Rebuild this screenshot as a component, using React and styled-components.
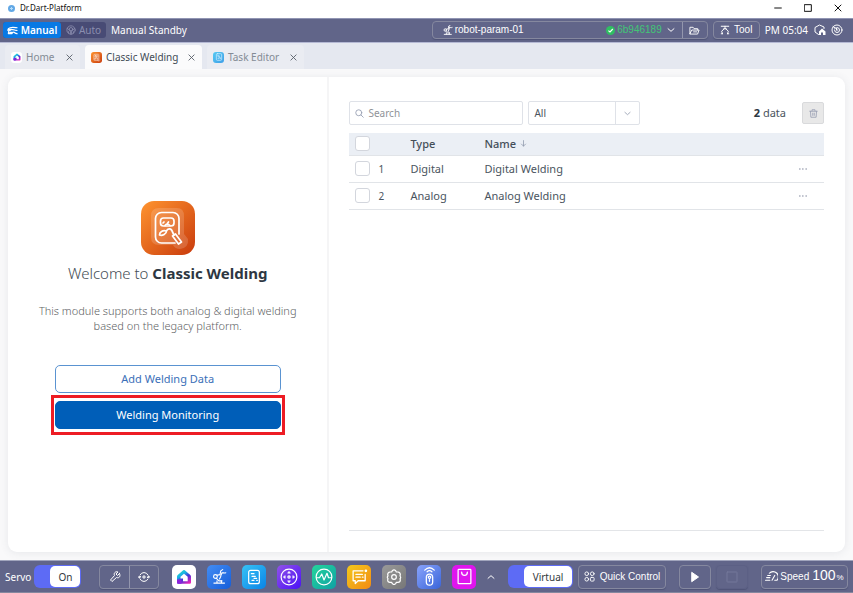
import React from "react";
import styled, { createGlobalStyle, css } from "styled-components";

const GlobalStyle = createGlobalStyle`
  *, *::before, *::after { box-sizing: border-box; }
  body { margin: 0; background: #f9f9fa; }
  button, input, select { font: inherit; color: inherit; margin: 0; padding: 0; }
  button { cursor: pointer; background: none; border: 0; }
  svg { display: block; flex: none; }
`;

const ui = `"Noto Sans", "Open Sans", sans-serif`;
const arial = `"Liberation Sans", Arial, sans-serif`;

const Window = styled.div`
  min-height: 100vh;
  display: flex;
  flex-direction: column;
  font: 400 10px/16px ${ui};
  color: #4a545e;
`;

/* ---------- window title ---------- */
const TitleBar = styled.header`
  height: 18px;
  display: flex;
  align-items: center;
  padding: 0 7px 2px 8px;
  gap: 5px;
  background: #fff;
  color: #111;
  font-size: 8px;
`;
const WindowControls = styled.div`
  margin-left: auto;
  display: flex;
  gap: 14px;
`;
const WindowButton = styled.button`
  width: 16px;
  height: 16px;
  display: grid;
  place-items: center;
`;

/* ---------- status bar ---------- */
const StatusBar = styled.div`
  height: 25px;
  display: flex;
  align-items: center;
  padding: 0 10px 1px 3px;
  background: #616589;
  border-top: 1px solid #9195b3;
  border-bottom: 1px solid #b5b9d4;
  color: #fff;
`;
const ModeSwitch = styled.div`
  display: flex;
  height: 16px;
  border-radius: 3px;
  background: #484b75;
`;
const ModeButton = styled.button`
  display: flex;
  align-items: center;
  justify-content: center;
  gap: 3px;
  width: ${(p) => (p.$active ? 58 : 45)}px;
  border-radius: 3px;
  font-weight: ${(p) => (p.$active ? 600 : 400)};
  color: ${(p) => (p.$active ? "#fff" : "#8b8eaf")};
  background: ${(p) => (p.$active ? "#0879e4" : "transparent")};
`;
const Status = styled.span`
  margin-left: 5px;
`;
const outline = css`
  border: 1px solid #85889f;
  border-radius: 4px;
  box-shadow: 0 1px 1px #4f5377;
`;
const ParamBox = styled.div`
  ${outline}
  margin-left: auto;
  width: 276px;
  height: 18px;
  display: flex;
  font: 10px/16px ${arial};
`;
const ParamSelect = styled.button`
  flex: 1;
  display: flex;
  align-items: center;
  padding: 0 7px 0 10px;
  gap: 2px;
`;
const Hash = styled.span`
  margin-left: auto;
  display: flex;
  align-items: center;
  gap: 2px;
  margin-right: 3px;
  color: #42c576;
`;
const FolderButton = styled.button`
  width: 25px;
  display: grid;
  place-items: center;
  border-left: 1px solid #9396ad;
`;
const ToolButton = styled.button`
  ${outline}
  margin-left: 5px;
  width: 47px;
  height: 18px;
  display: flex;
  align-items: center;
  justify-content: center;
  gap: 4px;
  font: 500 10px/16px ${arial};
`;
const Clock = styled.span`
  margin: 0 6px 0 5px;
`;
const IconButton = styled.button`
  display: grid;
  place-items: center;
  width: 12px;
  height: 16px;
  margin-right: ${(p) => p.$gap || 0}px;
`;

/* ---------- tabs ---------- */
const Tabs = styled.nav`
  height: 26px;
  padding: 2px 0 0 5px;
  display: flex;
  gap: 5px;
  background: #e5e8f0;
`;
const Tab = styled.div`
  width: ${(p) => p.$w}px;
  display: flex;
  align-items: center;
  justify-content: space-between;
  padding: 0 6px;
  border-radius: 4px 4px 0 0;
  background: ${(p) => (p.$active ? "#fbfbfc" : "#eaecf2")};
  color: ${(p) => (p.$active ? "#414b55" : "#848b95")};
`;
const TabButton = styled.button`
  display: flex;
  align-items: center;
  gap: 4px;
  white-space: nowrap;
`;
const TabClose = styled.button`
  display: grid;
  place-items: center;
  width: 10px;
  height: 16px;
  color: #555b66;
`;

/* ---------- workspace ---------- */
const Workspace = styled.main`
  flex: 1;
  display: flex;
  padding: 8px;
  background: #f9f9fa;
`;
const Card = styled.div`
  flex: 1;
  display: flex;
  background: #fff;
  border-radius: 9px;
  box-shadow: 0 1px 8px rgba(70, 75, 100, 0.1);
`;
const Intro = styled.section`
  width: 38.4%;
  display: flex;
  flex-direction: column;
  align-items: center;
  justify-content: center;
  padding-top: 7px;
  border-right: 2px solid #f5f5f6;
  text-align: center;
`;
const Welcome = styled.h1`
  margin: 7px 0 0;
  font-size: 15px;
  line-height: 22px;
  font-weight: 300;
  color: #454d55;
  b { font-weight: 700; color: #2d3742; }
`;
const Description = styled.p`
  width: 270px;
  margin: 19px 0 32px;
  font-size: 11px;
  line-height: 15px;
  font-weight: 300;
  color: #606264;
`;
const Marked = styled.div`
  margin-top: 2px;
  padding: 3px 1px;
  border: 3px solid #ed1c24;
`;
const Action = styled.button`
  display: block;
  width: 226px;
  height: 28px;
  border-radius: 5px;
  border: 1px solid #5a93d1;
  font-size: 11px;
  color: #3b6fb8;
  ${(p) => p.$primary && css`
    background: #005eb8;
    border-color: #005eb8;
    color: #fff;
  `}
`;

const Listing = styled.section`
  flex: 1;
  display: flex;
  flex-direction: column;
  padding: 24px 21px 21px 20px;
`;
const Filters = styled.div`
  display: flex;
  align-items: center;
  margin-bottom: 8px;
`;
const field = css`
  height: 24px;
  border: 1px solid #dfe2e8;
  border-radius: 2px;
  background: #fff;
`;
const SearchBox = styled.label`
  ${field}
  width: 174px;
  display: flex;
  align-items: center;
  gap: 4px;
  padding: 0 5px;
  color: #9aa2b4;
  input {
    flex: 1;
    min-width: 0;
    border: 0;
    outline: 0;
    background: none;
  }
  input::placeholder { color: #8f9398; opacity: 1; }
`;
const SelectBox = styled.label`
  ${field}
  width: 112px;
  margin-left: 5px;
  display: grid;
  grid-template-columns: 1fr 24px;
  select {
    grid-area: 1 / 1 / 2 / 3;
    appearance: none;
    border: 0;
    background: none;
    padding-left: 5px;
  }
`;
const SelectArrow = styled.span`
  grid-area: 1 / 2 / 2 / 3;
  display: grid;
  place-items: center;
  border-left: 1px solid #dfe2e8;
  pointer-events: none;
  color: #9aa2b4;
`;
const Count = styled.span`
  margin-left: auto;
  font-size: 11px;
  b { color: #2d3742; }
`;
const DeleteButton = styled.button`
  width: 22px;
  height: 22px;
  margin-left: 16px;
  display: grid;
  place-items: center;
  border: 1px solid #d9dadc;
  border-radius: 2px;
  background: #e8e8e8;
  color: #9da3b5;
`;
const TableArea = styled.div`
  flex: 1;
  border-bottom: 1px solid #e3e5e8;
`;
const Table = styled.table`
  width: 100%;
  border-collapse: collapse;
  table-layout: fixed;
  font-size: 11px;
  th, td {
    padding: 0;
    height: 27px;
    text-align: left;
    font-weight: 400;
    border-bottom: 1px solid #e1e4e8;
  }
  th {
    height: 22px;
    font-weight: 500;
    color: #444e58;
    background: #ebeff5;
  }
  td:first-child, th:first-child { padding-left: 6px; }
`;
const Col = styled.col`
  width: ${(p) => p.$w}px;
`;
const Check = styled.input`
  display: block;
  appearance: none;
  width: 15px;
  height: 15px;
  border: 1px solid #d3d6dd;
  border-radius: 3px;
  background: #fff;
`;
const RowNumber = styled.td`
  font-size: 10px;
`;
const SortButton = styled.button`
  display: flex;
  align-items: center;
  gap: 4px;
`;
const MoreButton = styled.button`
  display: block;
  width: 10px;
  height: 16px;
  color: #9ba1b2;
`;

/* ---------- bottom bar ---------- */
const BottomBar = styled.footer`
  height: 33px;
  display: flex;
  align-items: center;
  padding: 0 5px;
  background: #616589;
  border-top: 1px solid #a1a5bd;
  border-bottom: 1px solid #85889f;
  color: #fff;
`;
const Toggle = styled.label`
  width: ${(p) => p.$w}px;
  height: 23px;
  margin-left: ${(p) => p.$left}px;
  display: flex;
  padding: 1px 1px 1px 16px;
  border-radius: 6px;
  background: #5d6bf5;
  span {
    flex: 1;
    display: grid;
    place-items: center;
    border-radius: 5px;
    background: #fff;
    color: #333940;
  }
  input {
    appearance: none;
    width: 0;
    height: 0;
  }
`;
const Group = styled.div`
  ${outline}
  height: 24px;
  margin-left: ${(p) => p.$left}px;
  display: flex;
`;
const GroupButton = styled.button`
  width: 29px;
  display: grid;
  place-items: center;
  & + & { border-left: 1px solid #9396ad; }
`;
const Dock = styled.div`
  flex: 1;
  display: flex;
  align-items: center;
  justify-content: center;
  gap: 11px;
`;
const App24 = styled.button`
  width: 24px;
  height: 24px;
  display: grid;
  place-items: center;
  border-radius: 5px;
  background: ${(p) => p.$bg};
`;
const DockArrow = styled.button`
  width: 8px;
  height: 24px;
`;
const BarButton = styled.button`
  ${outline}
  width: ${(p) => p.$w}px;
  height: 24px;
  margin-left: ${(p) => p.$left}px;
  display: flex;
  align-items: center;
  justify-content: center;
  gap: ${(p) => p.$gap || 0}px;
  font: 10px/16px ${arial};
  &:disabled { border-color: #5c6085; color: #74789a; cursor: default; }
`;
const SpeedValue = styled.span`
  display: flex;
  align-items: baseline;
  font-size: 14px;
  margin-left: 1px;
  small { font-size: 8px; margin-left: 1px; }
`;

/* ---------- drawings ---------- */
const Icon = ({ size = 12, box = 24, w = 2, children }) => (
  <svg width={size} height={size} viewBox={`0 0 ${box} ${box}`} fill="none" stroke="currentColor"
    strokeWidth={w} strokeLinecap="round" strokeLinejoin="round" aria-hidden="true">{children}</svg>
);
const Close = ({ size = 7, w = 3 }) => <Icon size={size} w={w}><path d="M3 3l18 18M21 3L3 21" /></Icon>;
const Chevron = ({ size = 8, up }) => (
  <Icon size={size} w={3}><path d={up ? "M3 16l9-8 9 8" : "M3 8l9 8 9-8"} /></Icon>
);
const RobotArm = ({ size = 12, w = 2 }) => (
  <Icon size={size} w={w}>
    <path d="M3 22.500h17M8 22v-3M15 22v-3" />
    <circle cx="5.500" cy="12" r="3" />
    <path d="M8 10l5-1M7 15l4 4h5M14 12l-2 4" />
    <path d="M14 11l2-5M13 8l1-5M16 6c3 0 4 1 6 0M14 3l3-2" />
  </Icon>
);
const HomeMark = ({ size = 16, id }) => (
  <svg width={size} height={size} viewBox="0 0 16 16" aria-hidden="true">
    <defs>
      <linearGradient id={id} x1=".1" y1="0" x2=".8" y2="1">
        <stop offset="0" stopColor="#2be0b8" /><stop offset=".35" stopColor="#18b3e6" />
        <stop offset=".6" stopColor="#4335d8" /><stop offset="1" stopColor="#ee22b8" />
      </linearGradient>
    </defs>
    <path fillRule="evenodd" fill={`url(#${id})`}
      d="M7.200 1.300Q8 .8 8.800 1.300L14.300 6Q15 6.600 15 7.500V13.500Q15 14.800 13.700 14.800H2.300Q1 14.800 1 13.500V7.500Q1 6.600 1.700 6zM8 4.800L4.500 7.800V9.500H7V12.300H11.700V7.800z" />
    <path d="M1 10.500h4.500v4.300H2.300Q1 14.800 1 13.500z" fill="#8c22dc" />
  </svg>
);
const WeldIcon = ({ size, id }) => (
  <svg width={size} height={size} viewBox="0 0 54 54" aria-hidden="true">
    <defs>
      <linearGradient id={id} x1="0" y1="0" x2="1" y2="1">
        <stop offset="0" stopColor="#ff942f" /><stop offset="1" stopColor="#c93b0d" />
      </linearGradient>
    </defs>
    <rect width="54" height="54" rx="13" fill={`url(#${id})`} />
    <path d="M18 7h18q7 0 7 8v18l4 5q1 9-8 10-5 0-7-4H18q-8 0-8-8V15q0-8 8-8z" fill="#fff" opacity=".16" />
    <g fill="none" stroke="#fff" strokeWidth="1.700" strokeLinecap="round" strokeLinejoin="round">
      <path d="M34 42H20.500a6 6 0 0 1-6-6V17.500a6 6 0 0 1 6-6H32a6 6 0 0 1 6 6V33" />
      <rect x="19.500" y="17" width="13.500" height="8" rx="3" />
      <path d="M24 24.500q2-3 5 0M26 23l1.500-2M22 22l1-1" />
      <path d="M18.500 34c0-3 3-5 7-4 0 3-4 5-7 4zM25.500 30c1-3 5-3 6 1l1.500 3" />
      <path d="M31.500 35l3-2 6 8-3 2z" />
    </g>
  </svg>
);
const TaskMark = ({ size = 12, w = 2 }) => (
  <Icon size={size} w={w}>
    <rect x="4" y="2" width="16" height="20" rx="3" /><path d="M8 7h4M9 11h5M12 14h4M9 17h3M16 17h1" />
  </Icon>
);
const TaskTab = styled.span`
  width: 11px;
  height: 11px;
  display: grid;
  place-items: center;
  border-radius: 3px;
  background: linear-gradient(135deg, #55c9f2, #3f9fe8);
  color: #d9f2ff;
`;
const HomeTab = styled.span`
  width: 11px;
  height: 11px;
  display: grid;
  place-items: center;
  border-radius: 3px;
  background: #fff;
`;

const rows = [
  { id: 1, type: "Digital", name: "Digital Welding" },
  { id: 2, type: "Analog", name: "Analog Welding" },
];

const dock = [
  ["Home", "#fff", <HomeMark size={16} id="dock-home" />],
  ["Robot", "linear-gradient(135deg,#438cf3,#155ed9)", <RobotArm size={15} w={1.8} />],
  ["Task Editor", "linear-gradient(135deg,#37c3f6,#0a83e6)", <TaskMark size={16} w={1.8} />],
  ["Jog", "linear-gradient(135deg,#9152e9,#4a12f5)", (
    <Icon size={18} w={1.6}>
      <circle cx="12" cy="12" r="10.500" /><circle cx="12" cy="12" r="1.500" />
      <path d="M10.500 6.500l1.500-2 1.500 2zM10.500 17.500l1.500 2 1.500-2zM6.500 10.500l-2 1.500 2 1.500zM17.500 10.500l2 1.500-2 1.500z" fill="currentColor" strokeWidth="1" />
    </Icon>
  )],
  ["Monitoring", "linear-gradient(135deg,#24d69c,#10a0a4)", (
    <Icon size={18} w={1.6}><circle cx="12" cy="12" r="10.500" /><path d="M2 13h4l3-5 3 8 4-9 2 6h4" /></Icon>
  )],
  ["Log", "linear-gradient(135deg,#f3c81b,#f28b14)", (
    <Icon size={17} w={1.8}><path d="M17 4H3v14h3v4l4-4h10V9M7 9h9M7 13h6M16 13h1" /><circle cx="21" cy="4" r="1" fill="currentColor" /></Icon>
  )],
  ["Settings", "linear-gradient(135deg,#9a9a9a,#777)", (
    <Icon size={16} w={1.8}>
      <path d="M9.500 2.500q2.500-2.500 5 0l1 2 2.500 0q3.500.5 3.500 4l-.5 2q2 2.500 0 4l.5 2q0 3.500-3.500 3.500l-2.500 0-1 2q-2.500 2.500-5 0l-1-2-2.500 0q-3.500 0-3.500-3.500l.5-2q-2-2.500 0-4l-.5-2q0-3.500 3.500-4l2.500 0z" />
      <circle cx="12" cy="12" r="3.500" />
    </Icon>
  )],
  ["Remote Control", "linear-gradient(135deg,#89a3fb,#3a65d9)", (
    <Icon size={19} w={1.6}>
      <rect x="8" y="9" width="8" height="14" rx="4" /><circle cx="12" cy="13" r="1.500" />
      <path d="M12 16v2M9 6q3-3 6 0M6 4q6-6 12 0" />
    </Icon>
  )],
  ["Store", "#df15ee", <Icon size={17} w={1.8}><rect x="3" y="2" width="18" height="20" rx="1" /><path d="M8 6c0 6 8 6 8 0" /></Icon>],
];

export default function App() {
  return (
    <Window>
      <GlobalStyle />
      <TitleBar>
        <svg width="7" height="7" viewBox="0 0 7 7" aria-hidden="true">
          <circle cx="3.500" cy="3.500" r="3.500" fill="#62a8e5" /><path d="M2 3.500h3M3.500 2v3" stroke="#b6dcfa" />
        </svg>
        <span>Dr.Dart-Platform</span>
        <WindowControls>
          <WindowButton aria-label="Minimize"><Icon size={8} w={3}><path d="M2 12h20" /></Icon></WindowButton>
          <WindowButton aria-label="Maximize"><Icon size={8} w={3}><path d="M2 2h20v20H2z" /></Icon></WindowButton>
          <WindowButton aria-label="Close"><Close size={8} /></WindowButton>
        </WindowControls>
      </TitleBar>

      <StatusBar>
        <ModeSwitch>
          <ModeButton $active aria-pressed="true">
            <Icon size={11} w={2.6}><path d="M3 8c5-5 12-3 19-2M1 11c6-3 10-2 16 0l5 1M8 12H4l-1 7h8c1-4 4-4 6-2s3 2 5 2M6 16h6" /></Icon>
            Manual
          </ModeButton>
          <ModeButton aria-pressed="false">
            <Icon size={10}><circle cx="12" cy="12" r="10" /><circle cx="12" cy="10" r="4" /><path d="M3 8l7 6 2 8M21 8l-7 6-2 8M7 20l-2-5M17 20l2-5" /></Icon>
            Auto
          </ModeButton>
        </ModeSwitch>
        <Status>Manual Standby</Status>
        <ParamBox>
          <ParamSelect>
            <RobotArm size={10} w={2.2} />
            robot-param-01
            <Hash>
              <svg width="9" height="9" viewBox="0 0 9 9" aria-hidden="true">
                <circle cx="4.500" cy="4.500" r="4.500" fill="#2fbf62" /><path d="M2.400 4.600L4 6l2.800-3" fill="none" stroke="#fff" strokeWidth="1.100" />
              </svg>
              6b946189
            </Hash>
            <Chevron />
          </ParamSelect>
          <FolderButton aria-label="Open folder">
            <Icon size={11}><path d="M2 19V5h7l2 3h8v3M2 19l4-8h16l-3 8zM10 15h7" /></Icon>
          </FolderButton>
        </ParamBox>
        <ToolButton>
          <Icon size={10} w={2.4}><path d="M3 3h18M12 3v6M9 9h6M9 10l-5 5 2 6M15 10l5 5-2 6M3 21h3M18 21h3" /></Icon>
          Tool
        </ToolButton>
        <Clock>PM 05:04</Clock>
        <IconButton aria-label="Safety" $gap={5}>
          <Icon size={12}><path d="M9 21l-7-5V7l9-5 9 4v3" /><path fillRule="evenodd" d="M10 22v-7l6-6 7 6v7zM14 22h4v-5h-4z" fill="currentColor" stroke="none" /></Icon>
        </IconButton>
        <IconButton aria-label="Recovery">
          <Icon size={12}><circle cx="12" cy="12" r="10" /><path d="M7 8h4v4M7 12a5 5 0 1 0 5-5" /><path d="M12 12h1M4 5l4 3" /></Icon>
        </IconButton>
      </StatusBar>

      <Tabs aria-label="Open modules">
        <Tab $w={75}>
          <TabButton><HomeTab><HomeMark size={8} id="tab-home" /></HomeTab>Home</TabButton>
          <TabClose aria-label="Close Home"><Close /></TabClose>
        </Tab>
        <Tab $w={117} $active>
          <TabButton aria-current="page"><WeldIcon size={11} id="tab-weld" />Classic Welding</TabButton>
          <TabClose aria-label="Close Classic Welding"><Close /></TabClose>
        </Tab>
        <Tab $w={97}>
          <TabButton><TaskTab><TaskMark size={8} /></TaskTab>Task Editor</TabButton>
          <TabClose aria-label="Close Task Editor"><Close /></TabClose>
        </Tab>
      </Tabs>

      <Workspace>
        <Card>
          <Intro>
            <WeldIcon size={54} id="intro-weld" />
            <Welcome>Welcome to <b>Classic Welding</b></Welcome>
            <Description>This module supports both analog &amp; digital welding based on the legacy platform.</Description>
            <Action>Add Welding Data</Action>
            <Marked><Action $primary>Welding Monitoring</Action></Marked>
          </Intro>
          <Listing>
            <Filters>
              <SearchBox>
                <Icon size={9} w={2.4}><circle cx="10" cy="10" r="8" /><path d="M16 16l6 6" /></Icon>
                <input type="search" placeholder="Search" aria-label="Search" />
              </SearchBox>
              <SelectBox>
                <select aria-label="Type filter" defaultValue="All">
                  <option>All</option><option>Digital</option><option>Analog</option>
                </select>
                <SelectArrow><Chevron size={7} /></SelectArrow>
              </SelectBox>
              <Count><b>2</b> data</Count>
              <DeleteButton aria-label="Delete selected">
                <Icon size={9} w={2.4}><path d="M2 6h20M8 5V2h8v3M4 6l1 16h14l1-16M10 11v6M14 11v6" /></Icon>
              </DeleteButton>
            </Filters>
            <TableArea>
              <Table>
                <colgroup><Col $w={29} /><Col $w={32} /><Col $w={74} /><col /><Col $w={25} /></colgroup>
                <thead>
                  <tr>
                    <th><Check type="checkbox" aria-label="Select all" /></th>
                    <th aria-label="Number" />
                    <th>Type</th>
                    <th><SortButton>Name <Icon size={7} w={2.6}><path d="M12 2v19M5 14l7 7 7-7" stroke="#8d98ab" /></Icon></SortButton></th>
                    <th aria-label="Actions" />
                  </tr>
                </thead>
                <tbody>
                  {rows.map((r) => (
                    <tr key={r.id}>
                      <td><Check type="checkbox" aria-label={`Select ${r.name}`} /></td>
                      <RowNumber>{r.id}</RowNumber>
                      <td>{r.type}</td>
                      <td>{r.name}</td>
                      <td>
                        <MoreButton aria-label={`More for ${r.name}`}>
                          <Icon size={8} w={4}><path d="M2 12h1M11 12h1M21 12h1" /></Icon>
                        </MoreButton>
                      </td>
                    </tr>
                  ))}
                </tbody>
              </Table>
            </TableArea>
          </Listing>
        </Card>
      </Workspace>

      <BottomBar>
        <span id="servo">Servo</span>
        <Toggle $w={47} $left={3}>
          <input type="checkbox" role="switch" defaultChecked aria-labelledby="servo" /><span>On</span>
        </Toggle>
        <Group $left={18}>
          <GroupButton aria-label="Tools">
            <Icon size={12}><path d="M21 5l-4 4-3-3 4-4c-6-2-9 3-7 7l-8 9 3 3 9-8c5 2 9-2 6-8z" /></Icon>
          </GroupButton>
          <GroupButton aria-label="Align">
            <Icon size={12}><path d="M4 8a9 9 0 0 1 16 0M20 16a9 9 0 0 1-16 0M12 9v6M9 12h6M0 12h5M19 12h5M3 14l-1-2 3-1M21 10l1 2-3 1" /></Icon>
          </GroupButton>
        </Group>
        <Dock>
          {dock.map(([label, bg, icon]) => <App24 key={label} $bg={bg} aria-label={label}>{icon}</App24>)}
          <DockArrow aria-label="More apps"><Chevron size={8} up /></DockArrow>
        </Dock>
        <Toggle $w={65} $left={0}>
          <input type="checkbox" role="switch" defaultChecked /><span>Virtual</span>
        </Toggle>
        <BarButton $w={88} $left={5} $gap={5}>
          <Icon size={11}><circle cx="6" cy="6" r="4" /><circle cx="18" cy="6" r="4" /><circle cx="6" cy="18" r="4" /><rect x="14" y="14" width="8" height="8" rx="2" /></Icon>
          Quick Control
        </BarButton>
        <BarButton $w={32} $left={13} aria-label="Play">
          <Icon size={12}><path d="M6 3l13 9-13 9z" fill="currentColor" /></Icon>
        </BarButton>
        <BarButton $w={32} $left={5} disabled aria-label="Stop">
          <Icon size={12} w={2}><rect x="2" y="2" width="20" height="20" rx="1" /></Icon>
        </BarButton>
        <BarButton $w={87} $left={13} $gap={2}>
          <Icon size={13}><path d="M8 6a9 9 0 0 1 14 13h-4M13 19l5-9M5 10h5M3 14h6M1 19h8" /></Icon>
          Speed
          <SpeedValue>100<small>%</small></SpeedValue>
        </BarButton>
      </BottomBar>
    </Window>
  );
}
